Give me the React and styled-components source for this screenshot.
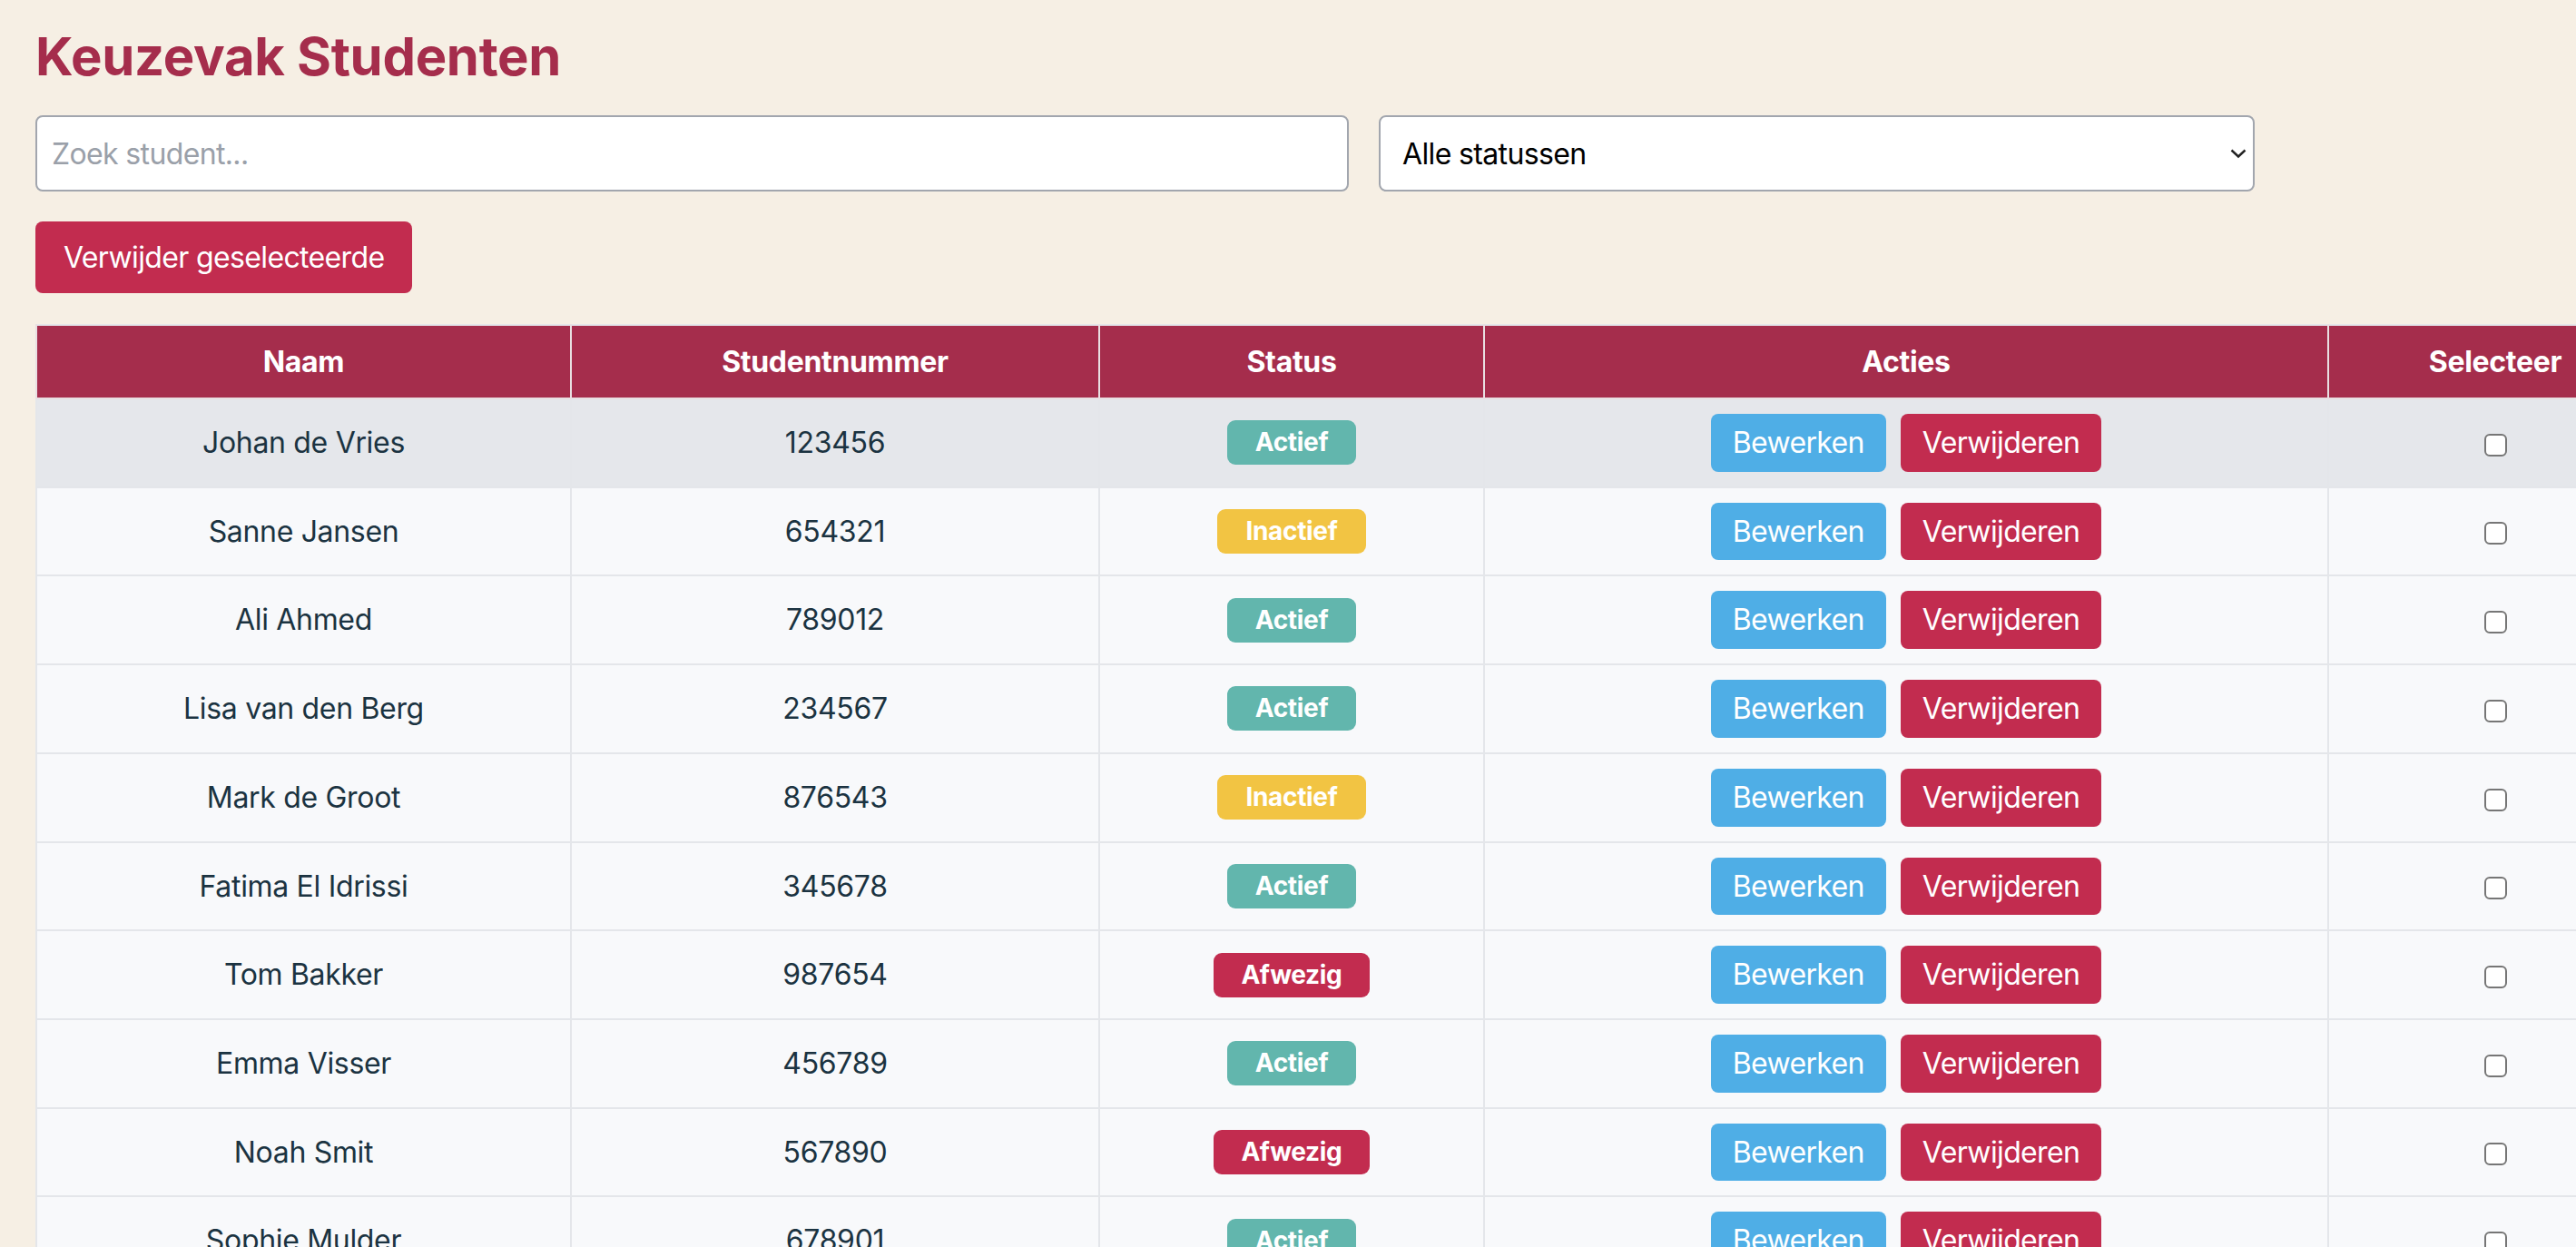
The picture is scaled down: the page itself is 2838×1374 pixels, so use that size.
import React, { useState } from "react";
import styled, { createGlobalStyle, css } from "styled-components";

const GlobalStyle = createGlobalStyle`
  html, body {
    margin: 0;
    padding: 0;
    overflow: hidden;
    background: #f6efe4;
  }
  body {
    font-family: Inter, "Liberation Sans", Arial, sans-serif;
    letter-spacing: -0.02em;
    color: #1b3341;
  }
  * {
    box-sizing: border-box;
  }
`;

const Page = styled.div`
  padding: 0 0 40px 39px;
  width: max-content;
`;

const Title = styled.h1`
  margin: 29px 0 32px;
  font-size: 58px;
  line-height: 66px;
  font-weight: 700;
  color: #a52d4c;
`;

const Filters = styled.div`
  display: flex;
  gap: 33px;
`;

const fieldBase = css`
  height: 84px;
  border: 2px solid #a2a6ae;
  border-radius: 8px;
  background: #fff;
  font: inherit;
  font-size: 32px;
  letter-spacing: -0.02em;
  outline: none;
`;

const Search = styled.input`
  ${fieldBase};
  width: 1447px;
  padding: 0 16px;
  color: #1b3341;
  &::placeholder {
    color: #9aa0a9;
  }
`;

const SelectWrap = styled.div`
  width: 965px;
  position: relative;
  display: flex;
`;

const Select = styled.select`
  ${fieldBase};
  flex: 1;
  appearance: none;
  padding: 0 60px 0 24px;
  color: #000;
`;

const Chevron = styled.svg`
  position: absolute;
  right: 9px;
  top: 50%;
  width: 18px;
  height: 12px;
  transform: translateY(-50%);
  pointer-events: none;
`;

const BulkButton = styled.button`
  display: block;
  margin: 33px 0 34px;
  padding: 0 31px;
  height: 79px;
  border: none;
  border-radius: 8px;
  background: #c22c4f;
  color: #fff;
  font: inherit;
  font-size: 32px;
  letter-spacing: -0.02em;
`;

const Table = styled.table`
  width: 2893px;
  table-layout: fixed;
  border-collapse: collapse;
  border: 2px solid #e4e6ea;
`;

const HeadCell = styled.th`
  padding: 20px 16px;
  line-height: 39px;
  font-size: 32px;
  font-weight: 700;
  color: #fff;
  background: #a52d4c;
  border: 2px solid #e9dfe2;
  border-top: none;
  text-align: center;
`;

const Row = styled.tr`
  background: ${p => (p.$hover ? "#e5e7eb" : "#f8f9fb")};
`;

const Cell = styled.td`
  padding: 16px;
  font-size: 32px;
  line-height: 39.7px;
  text-align: center;
  border: 2px solid #e4e6ea;
  white-space: nowrap;
`;

const badgeColors = {
  Actief: "#62b6ad",
  Inactief: "#f2c443",
  Afwezig: "#c22c4f"
};

const Badge = styled.span`
  display: inline-block;
  padding: 8px 31px;
  border-radius: 9px;
  background: ${p => badgeColors[p.$status]};
  color: #fff;
  font-size: 28px;
  line-height: 33px;
  font-weight: 700;
  vertical-align: middle;
`;

const Actions = styled.div`
  display: flex;
  justify-content: center;
  gap: 16px;
`;

const ActionButton = styled.button`
  padding: 12px 24px;
  border: none;
  border-radius: 8px;
  background: ${p => (p.$danger ? "#c22c4f" : "#4faee6")};
  color: #fff;
  font: inherit;
  font-size: 32px;
  line-height: 39.7px;
  letter-spacing: -0.02em;
`;

const Check = styled.span`
  display: inline-block;
  width: 25px;
  height: 25px;
  border: 2.5px solid #767676;
  border-radius: 6px;
  background: #fff;
  vertical-align: middle;
`;

const students = [
  { name: "Johan de Vries", nr: "123456", status: "Actief" },
  { name: "Sanne Jansen", nr: "654321", status: "Inactief" },
  { name: "Ali Ahmed", nr: "789012", status: "Actief" },
  { name: "Lisa van den Berg", nr: "234567", status: "Actief" },
  { name: "Mark de Groot", nr: "876543", status: "Inactief" },
  { name: "Fatima El Idrissi", nr: "345678", status: "Actief" },
  { name: "Tom Bakker", nr: "987654", status: "Afwezig" },
  { name: "Emma Visser", nr: "456789", status: "Actief" },
  { name: "Noah Smit", nr: "567890", status: "Afwezig" },
  { name: "Sophie Mulder", nr: "678901", status: "Actief" },
  { name: "Daan de Boer", nr: "789123", status: "Inactief" }
];

const columns = [
  { label: "Naam", width: 589 },
  { label: "Studentnummer", width: 582 },
  { label: "Status", width: 424 },
  { label: "Acties", width: 930 },
  { label: "Selecteer", width: 368 }
];

export default function App() {
  const [query, setQuery] = useState("");

  return (
    <Page>
      <GlobalStyle />
      <Title>Keuzevak Studenten</Title>
      <Filters>
        <Search
          placeholder="Zoek student..."
          value={query}
          onChange={e => setQuery(e.target.value)}
        />
        <SelectWrap>
          <Select defaultValue="all">
            <option value="all">Alle statussen</option>
            <option value="Actief">Actief</option>
            <option value="Inactief">Inactief</option>
            <option value="Afwezig">Afwezig</option>
          </Select>
          <Chevron viewBox="0 0 18 12">
            <path d="M1.5 2.5 L9 9.5 L16.5 2.5" fill="none" stroke="#222" strokeWidth="2.4" />
          </Chevron>
        </SelectWrap>
      </Filters>
      <BulkButton>Verwijder geselecteerde</BulkButton>
      <Table>
        <colgroup>
          {columns.map(c => (
            <col key={c.label} style={{ width: c.width }} />
          ))}
        </colgroup>
        <thead>
          <tr>
            {columns.map(c => (
              <HeadCell key={c.label}>{c.label}</HeadCell>
            ))}
          </tr>
        </thead>
        <tbody>
          {students.map((s, i) => (
            <Row key={s.nr} $hover={i === 0}>
              <Cell>{s.name}</Cell>
              <Cell>{s.nr}</Cell>
              <Cell>
                <Badge $status={s.status}>{s.status}</Badge>
              </Cell>
              <Cell>
                <Actions>
                  <ActionButton>Bewerken</ActionButton>
                  <ActionButton $danger>Verwijderen</ActionButton>
                </Actions>
              </Cell>
              <Cell>
                <Check />
              </Cell>
            </Row>
          ))}
        </tbody>
      </Table>
    </Page>
  );
}
